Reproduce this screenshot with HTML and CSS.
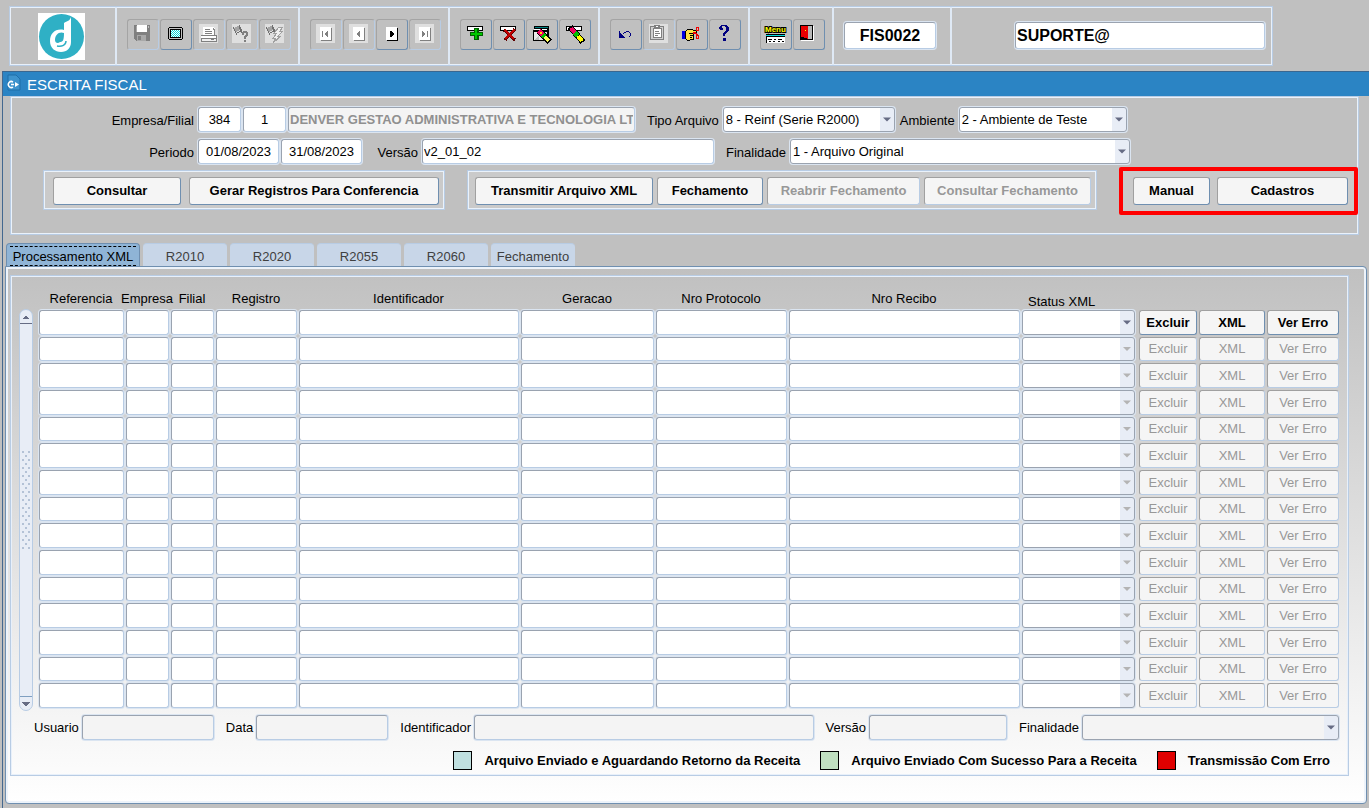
FILE: index.html
```
<!DOCTYPE html>
<html lang="pt-br">
<head>
  <meta charset="UTF-8">
  <meta name="viewport" content="width=device-width, initial-scale=1.0">
  <title>Escrita Fiscal</title>
  <link rel="stylesheet" href="styles.css">
</head>
<body>

  <svg class="defs" aria-hidden="true">
    <defs>
      <pattern id="xadrez" width="2" height="2" patternUnits="userSpaceOnUse">
        <rect width="2" height="2" fill="#ffffff"/>
        <rect width="1" height="1" fill="#00d8d8"/>
        <rect x="1" y="1" width="1" height="1" fill="#00d8d8"/>
      </pattern>
      <g id="barra">
        <rect x="1" y="2" width="16" height="5" fill="#000"/>
        <rect x="2" y="3" width="14" height="3" fill="#fff"/>
      </g>
      <g id="caneta">
        <path d="M2 4h1V3h2V2h2v1h1v3H7v1H5v1H4V7H3V6H2z" fill="#a4a4a4"/>
        <path d="M1 3h1v2h1v2h1v2h1v2H4V9H3V7H2V5H1zM7 1h1v2h1v2h1v4H9V7H8V5H7zM5 8h2V7h2v1H7v1H5z" fill="#707070"/>
      </g>
      <g id="folha-nav">
        <rect width="19" height="19" fill="#dfdfdf"/>
        <rect x="5" y="4" width="11" height="13" fill="#808080"/>
        <rect x="4" y="3" width="11" height="13" fill="#fff"/>
      </g>
    </defs>
  </svg>

  <header class="toolbar">
    <div class="secao logo">
      <svg width="47" height="47" viewBox="0 0 47 47" role="img" aria-label="Logo">
        <rect width="47" height="47" fill="#fff"/>
        <circle cx="23.500" cy="23.500" r="22.500" fill="#2fb0c5"/>
        <path d="M33 4C32 8 29 8 26 10V17C18 15 12 20 12 28c0 7 5 11 11 11 6 0 10-4 10-10z" fill="#fff"/>
        <path d="M26 20c-5-2-9 2-9 7 0 3 3 4 5 2 3 0 4-2 4-9z" fill="#2fb0c5"/>
        <path d="M19 33c5 1 9-1 9-5" stroke="#2fb0c5" stroke-width="1.500" fill="none"/>
      </svg>
    </div>

    <div class="secao">
      <button class="tb" disabled aria-label="Salvar">
        <svg viewBox="0 0 20 20"><path d="M1 1h16v16H3l-2-2z" fill="#808080"/><rect x="4" y="1" width="10" height="7" fill="#fff"/><rect x="3" y="2" width="1" height="6" fill="#a8a8a8"/><rect x="4" y="11" width="9" height="6" fill="#a8a8a8"/><rect x="5" y="12" width="3" height="4" fill="#808080"/><rect x="15" y="2" width="1" height="2" fill="#c0c0c0"/></svg>
      </button>
      <button class="tb" aria-label="Tela">
        <svg viewBox="0 0 20 20"><path d="M3 3h13v1h1v11h-1v1H3v-1H2V4h1z" fill="#000"/><rect x="3" y="4" width="13" height="11" fill="#c0c0c0"/><rect x="4" y="5" width="11" height="9" fill="#000"/><rect x="5" y="6" width="9" height="7" fill="url(#xadrez)"/></svg>
      </button>
      <button class="tb" disabled aria-label="Imprimir">
        <svg viewBox="0 0 20 20"><rect width="19" height="19" fill="#dfdfdf"/><path d="M4 3h10l2 2v6H4z" fill="#fff"/><path d="M14 4h1v1h1v6h-1V6h-1z" fill="#888"/><path d="M6 5h5v1H6zM6 7h7v1H6zM6 9h7v1H6z" fill="#808080"/><rect x="2" y="11" width="16" height="7" fill="#808080"/><rect x="2" y="12" width="15" height="2" fill="#fff"/><rect x="3" y="15" width="14" height="2" fill="#f0f0f0"/><rect x="12" y="15" width="3" height="1" fill="#808080"/></svg>
      </button>
      <button class="tb" disabled aria-label="Entrar consulta">
        <svg viewBox="0 0 20 20"><rect width="19" height="19" fill="#dfdfdf"/><use href="#caneta"/><path d="M10 8h1V7h4v1h1v4h-1v1h-1v2h-2v-3h1v-1h1V9h-2v2h-2zM12 16h2v2h-2z" fill="#808080"/></svg>
      </button>
      <button class="tb" disabled aria-label="Executar consulta">
        <svg viewBox="0 0 20 20"><rect width="19" height="19" fill="#dfdfdf"/><use href="#caneta"/><path d="M18 3h-4l-5 6h3l-4 5h3l-3 5 8-7h-3l5-5h-3z" fill="#f0f0f0" stroke="#a0a0a0"/></svg>
      </button>
    </div>

    <div class="secao">
      <button class="tb" disabled aria-label="Primeiro">
        <svg viewBox="0 0 20 20"><use href="#folha-nav"/><path d="M6 7h1v6H6zM12 7v6h-1v-1h-1v-1H9v-1H8h1V9h1V8h1V7z" fill="#808080"/></svg>
      </button>
      <button class="tb" disabled aria-label="Anterior">
        <svg viewBox="0 0 20 20"><use href="#folha-nav"/><path d="M11 7v6h-1v-1H9v-1H8v-1H7h1V9h1V8h1V7z" fill="#808080"/></svg>
      </button>
      <button class="tb" aria-label="Próximo">
        <svg viewBox="0 0 20 20"><rect x="5" y="4" width="11" height="13" fill="#000"/><rect x="4" y="3" width="11" height="13" fill="#fff"/><path d="M8 7h2v1h1v1h1v2h-1v1h-1v1H8z" fill="#000"/></svg>
      </button>
      <button class="tb" disabled aria-label="Último">
        <svg viewBox="0 0 20 20"><use href="#folha-nav"/><path d="M7 7h1v1h1v1h1v2H9v1H8v1H7zM12 7h1v6h-1z" fill="#808080"/></svg>
      </button>
    </div>

    <div class="secao">
      <button class="tb" aria-label="Inserir registro">
        <svg viewBox="0 0 20 20"><use href="#barra"/><path d="M8 4h5v4h4v4h-4v4H8v-4H4V8h4z" fill="#006000"/><path d="M9 5h2v4h5v2h-5v4H9v-4H5V9h4z" fill="#00c800"/></svg>
      </button>
      <button class="tb" aria-label="Excluir registro">
        <svg viewBox="0 0 20 20"><use href="#barra"/><path d="M5 6l11 10M16 5L6 16" stroke="#600000" stroke-width="3"/><path d="M6 6l9 9M15 6l-9 9" stroke="#c00000" stroke-width="1.500"/></svg>
      </button>
      <button class="tb" aria-label="Limpar bloco">
        <svg viewBox="0 0 20 20"><rect x="2" y="2" width="15" height="11" fill="#000"/><rect x="3" y="3" width="13" height="1" fill="#008080"/><rect x="1" y="6" width="15" height="11" fill="#000"/><rect x="2" y="5" width="13" height="1" fill="#fff"/><path d="M2 8h13v8H7l-1-3-4 3z" fill="#e8e8e8"/><path d="M2 16l5-5v5z" fill="#c0c0c0"/><path d="M7 7l11 11" stroke="#000" stroke-width="6"/><path d="M7 7l4 4" stroke="#f00060" stroke-width="5"/><path d="M11 11l2 2" stroke="#00c000" stroke-width="5"/><path d="M13 13l4 4" stroke="#ffff60" stroke-width="4"/><rect x="8" y="8" width="2" height="2" fill="#ffe000"/></svg>
      </button>
      <button class="tb" aria-label="Limpar registro">
        <svg viewBox="0 0 20 20"><use href="#barra"/><path d="M5 3l13 15" stroke="#000" stroke-width="6"/><path d="M6 4l5 6" stroke="#f00060" stroke-width="4"/><path d="M10 9l3 3" stroke="#00c000" stroke-width="5"/><path d="M13 12l4 5" stroke="#ffff00" stroke-width="4"/></svg>
      </button>
    </div>

    <div class="secao">
      <button class="tb" aria-label="Desfazer">
        <svg viewBox="0 0 20 20"><path d="M3 7v7h6v-1H8v-1H7v-1H6v-1H5V9H4V7z" fill="#000080"/><path d="M7 9h1V8h2V7h3v1h1v1h1v3h-1v1h-1v-1h1V9h-1V8h-3v1H8v1H7z" fill="#000080"/></svg>
      </button>
      <button class="tb" disabled aria-label="Colar">
        <svg viewBox="0 0 20 20"><rect width="19" height="19" fill="#dfdfdf"/><rect x="1.500" y="2.500" width="13" height="13" rx="1" fill="#d0d0d0" stroke="#808080"/><rect x="4.500" y="4.500" width="8" height="9" fill="#fff" stroke="#808080"/><path d="M5 1h6v3H5z" fill="#808080"/><rect x="7" y="2" width="2" height="1" fill="#fff"/><path d="M6 7h4v1H6zM6 9h5v1H6zM6 11h3v1H6z" fill="#808080"/></svg>
      </button>
      <button class="tb" aria-label="Recortar">
        <svg viewBox="0 0 20 20"><path d="M0 7h3v8H0z" fill="#0000e0"/><path d="M3 8l3-3h3l2 1h3v3h-3v6H9l-1 1H5l-2-2z" fill="#ffe040" stroke="#000"/><path d="M7 9h4v1H7zM8 11h3v1H8zM8 13h2v1H8z" fill="#000"/><path d="M11 8l3 1 3 4M11 10l3-1" stroke="#f00000" fill="none"/><circle cx="15.500" cy="5" r="1.600" fill="none" stroke="#f00000"/><circle cx="15.500" cy="13" r="1.600" fill="none" stroke="#f00000"/></svg>
      </button>
      <button class="tb" aria-label="Ajuda">
        <svg viewBox="0 0 20 20"><path d="M4 3h1V2h1V1h6v1h1v1h1v4h-1v1h-1v1h-1v1h-1v2H8V9h1V8h1V7h1V3h-1V2H7v2h1v2H5V5H4z" fill="#000080"/><rect x="8" y="14" width="3" height="3" fill="#000080"/></svg>
      </button>
    </div>

    <div class="secao">
      <button class="tb" aria-label="Menu">
        <svg viewBox="0 0 20 20"><text class="menu-txt" x="-1" y="8" aria-hidden="true">Menu</text><rect y="10" width="19" height="1" fill="#000"/><rect y="11" width="19" height="1" fill="#00e0e0"/><rect y="12" width="19" height="7" fill="#fff"/><path d="M0 12h19v1H0zM0 13h1v6H0zM2 15h4v1H2zM8 15h2v1H8zM12 15h4v1h-4zM3 17h2v1H3zM7 17h2v1H7zM12 17h2v1h-2zM16 17h2v1h-2z" fill="#000"/></svg>
      </button>
      <button class="tb" aria-label="Sair">
        <svg viewBox="0 0 20 20"><rect x="2" y="2" width="13" height="15" fill="#fff"/><rect x="1" y="1" width="13" height="15" fill="#000"/><rect x="9" y="2" width="4" height="13" fill="#b8b8b8"/><path d="M2 2h7v13H8v-1H5v-1H2z" fill="#e80000"/><rect x="6" y="6" width="1" height="1" fill="#ffff00"/></svg>
      </button>
    </div>

    <div class="secao">
      <input class="codigo" type="text" value="FIS0022" aria-label="Programa">
    </div>

    <div class="secao usuario">
      <input type="text" value="SUPORTE@" aria-label="Usuario logado">
    </div>
  </header>

  <main class="janela">
    <div class="titulo">
      <svg width="14" height="17" viewBox="0 0 14 17" aria-hidden="true">
        <path d="M1 1h8l4 4v11H1z" fill="#3d93cd" stroke="#1f6ea8"/>
        <path d="M6 8a3 3 0 1 0 0 5M4 10.500h3" stroke="#fff" stroke-width="1.500" fill="none"/>
        <path d="M8 8l4 2.500-4 2.500z" fill="#fff"/>
      </svg>
      <h1>ESCRITA FISCAL</h1>
    </div>

    <section class="filtros">
      <div class="linha">
        <div class="campo">
          <label class="primeiro" for="empresa">Empresa/Filial</label>
          <div class="junto">
            <input class="curto" type="text" id="empresa" value="384">
            <input class="curto" type="text" value="1" aria-label="Filial">
            <input class="nome" type="text" value="DENVER GESTAO ADMINISTRATIVA E TECNOLOGIA LTDA" disabled aria-label="Nome da empresa">
          </div>
        </div>
        <div class="campo">
          <label for="tipo">Tipo Arquivo</label>
          <select id="tipo" class="tipo"><option>8 - Reinf (Serie R2000)</option></select>
        </div>
        <div class="campo perto">
          <label for="ambiente">Ambiente</label>
          <select id="ambiente" class="ambiente"><option>2 - Ambiente de Teste</option></select>
        </div>
      </div>

      <div class="linha">
        <div class="campo">
          <label class="primeiro" for="periodo">Periodo</label>
          <div class="junto">
            <input class="data" type="text" id="periodo" value="01/08/2023">
            <input class="data" type="text" value="31/08/2023" aria-label="Periodo final">
          </div>
        </div>
        <div class="campo">
          <label for="versao">Versão</label>
          <input class="versao" type="text" id="versao" value="v2_01_02">
        </div>
        <div class="campo">
          <label for="finalidade">Finalidade</label>
          <select id="finalidade" class="finalidade"><option>1 - Arquivo Original</option></select>
        </div>
      </div>

      <div class="acoes">
        <div class="grupo consulta">
          <button class="btn b-consultar">Consultar</button>
          <button class="btn b-gerar">Gerar Registros Para Conferencia</button>
        </div>
        <div class="grupo">
          <button class="btn b-transmitir">Transmitir Arquivo XML</button>
          <button class="btn b-fechar">Fechamento</button>
          <button class="btn b-reabrir" disabled>Reabrir Fechamento</button>
          <button class="btn b-consfech" disabled>Consultar Fechamento</button>
        </div>
        <div class="destaque">
          <button class="btn b-manual">Manual</button>
          <button class="btn b-cadastros">Cadastros</button>
        </div>
      </div>
    </section>

    <nav class="abas" role="tablist">
      <button class="aba ativa" role="tab" aria-selected="true"><span>Processamento XML</span></button>
      <button class="aba" role="tab">R2010</button>
      <button class="aba" role="tab">R2020</button>
      <button class="aba" role="tab">R2055</button>
      <button class="aba" role="tab">R2060</button>
      <button class="aba" role="tab">Fechamento</button>
    </nav>

    <section class="painel">
      <div class="quadro">
        <div class="grade">
          <div class="rolagem">
            <button class="sobe" aria-label="Subir"></button>
            <div class="trilho"><span class="grip"></span></div>
            <button class="desce" aria-label="Descer"></button>
          </div>
          <table>
            <colgroup>
              <col class="c-ref"><col class="c-emp"><col class="c-emp"><col class="c-reg"><col>
              <col class="c-ger"><col class="c-prot"><col class="c-rec"><col class="c-status">
              <col class="c-exc"><col class="c-xml"><col class="c-erro">
            </colgroup>
            <thead>
              <tr>
                <th><span>Referencia</span></th>
                <th><span>Empresa</span></th>
                <th><span>Filial</span></th>
                <th><span>Registro</span></th>
                <th><span>Identificador</span></th>
                <th><span>Geracao</span></th>
                <th><span>Nro Protocolo</span></th>
                <th><span>Nro Recibo</span></th>
                <th class="status">Status XML</th>
                <td></td><td></td><td></td>
              </tr>
            </thead>
            <tbody id="linhas"></tbody>
          </table>
        </div>

        <div class="rodape">
          <label for="r-usuario">Usuario</label>
          <input class="r-curto" type="text" id="r-usuario" disabled>
          <label for="r-data">Data</label>
          <input class="r-curto" type="text" id="r-data" disabled>
          <label for="r-ident">Identificador</label>
          <input class="r-ident" type="text" id="r-ident" disabled>
          <label for="r-versao">Versão</label>
          <input class="r-versao" type="text" id="r-versao" disabled>
          <label for="r-final">Finalidade</label>
          <select class="r-final" id="r-final"><option></option></select>
        </div>

        <ul class="legenda">
          <li><i class="aguardando"></i>Arquivo Enviado e Aguardando Retorno da Receita</li>
          <li><i class="sucesso"></i>Arquivo Enviado Com Sucesso Para a Receita</li>
          <li><i class="erro"></i>Transmissão Com Erro</li>
        </ul>
      </div>
    </section>
  </main>

  <script>
    const campos = ['Referencia', 'Empresa', 'Filial', 'Registro', 'Identificador', 'Geracao', 'Nro Protocolo', 'Nro Recibo'];
    const linhas = document.getElementById('linhas');
    let html = '';

    // so a primeira linha fica habilitada
    for (let i = 1; i <= 15; i++) {
      const des = i > 1 ? 'disabled' : '';
      html += '<tr>';
      campos.forEach(c => {
        html += `<td><input type="text" aria-label="${c} ${i}"></td>`;
      });
      html += `<td class="status"><select aria-label="Status XML ${i}" ${des}><option></option></select></td>`;
      html += `<td><button class="btn" ${des}>Excluir</button></td>`;
      html += `<td><button class="btn" ${des}>XML</button></td>`;
      html += `<td class="ultimo"><button class="btn" ${des}>Ver Erro</button></td>`;
      html += '</tr>';
    }
    linhas.innerHTML = html;
  </script>
</body>
</html>
```
FILE: styles.css
```
*{
  box-sizing: border-box;
}
body{
  margin: 0;
  padding-left: 2px;
  background-color: #c0c0c0;
  color: black;
  font: 13px "Liberation Sans", Arial, sans-serif;
}
.defs{
  position: absolute;
  width: 0;
  height: 0;
}
button, input, select{
  font: inherit;
  color: inherit;
  margin: 0;
}

/* campos */
input, select{
  height: 25px;
  padding: 0 1px;
  background-color: white;
  border: 1px solid #9aa3b0;
  border-right-color: #b8cce4;
  border-bottom-color: #b8cce4;
  border-radius: 3px;
  box-shadow: 0 0 0 1px #dbe5f1;
}
input:disabled{
  background-color: #f4f4f4;
  color: #909090;
}
select{
  appearance: none;
  padding: 0 20px 0 2px;
  border-color: #9aa3b0;
  background-image: url("data:image/svg+xml,%3Csvg xmlns='http://www.w3.org/2000/svg' width='14' height='26'%3E%3Crect width='14' height='26' fill='%23e8edf6'/%3E%3Cpath d='M3 11h8l-4 4z' fill='%23666c84'/%3E%3C/svg%3E");
  background-repeat: no-repeat;
  background-position: right center;
}
select:disabled{
  opacity: 1;
  background-image: url("data:image/svg+xml,%3Csvg xmlns='http://www.w3.org/2000/svg' width='14' height='26'%3E%3Crect width='14' height='26' fill='%23e8edf6'/%3E%3Cpath d='M3 11h8l-4 4z' fill='%23b4b4b4'/%3E%3C/svg%3E");
}
.btn{
  height: 28px;
  padding: 0 0 1px;
  font-weight: bold;
  background-color: #f5f5f5;
  border: 1px solid #a0a0a0;
  border-right-color: #6f8fb0;
  border-bottom-color: #6f8fb0;
  border-radius: 3px;
  white-space: nowrap;
}
.btn:disabled{
  color: #989898;
  border-right-color: #b8cce4;
  border-bottom-color: #b8cce4;
}

/* barra de ferramentas */
.toolbar{
  display: flex;
  width: fit-content;
  height: 60px;
  margin: 6px 0 5px 7px;
  border: 1px solid #b8cce4;
  box-shadow: inset 0 0 0 1px #e8f0fa;
}
.secao{
  display: flex;
  align-items: flex-start;
  gap: 1px;
  padding: 12px 7px 0 10px;
  border-right: 2px solid #dfe9f5;
}
.secao:last-child{
  border-right: none;
}
.logo{
  padding: 6px 30px 0 28px;
}
.tb{
  width: 32px;
  height: 31px;
  padding: 4px 5px 5px;
  background: none;
  border: 1px solid #a4a4a4;
  border-right-color: #6f8fb0;
  border-bottom-color: #6f8fb0;
  border-radius: 3px;
}
.tb:disabled{
  border-right-color: #b8cce4;
  border-bottom-color: #b8cce4;
}
.tb svg{
  display: block;
  width: 20px;
  height: 20px;
  overflow: visible;
  shape-rendering: crispEdges;
}
.menu-txt{
  font: bold 8px "Liberation Sans", Arial, sans-serif;
  fill: #ffff00;
  stroke: black;
  stroke-width: 2px;
  paint-order: stroke;
}
.toolbar input{
  height: 27px;
  margin-top: 3px;
  font-size: 16px;
  font-weight: bold;
}
.toolbar .codigo{
  width: 92px;
  margin-right: 7px;
  text-align: center;
}
.usuario{
  padding-left: 63px;
}
.usuario input{
  width: 250px;
}

/* janela */
.janela{
  border-left: 1px solid #44688f;
  padding-bottom: 5px;
}
.titulo{
  display: flex;
  align-items: center;
  gap: 6px;
  height: 25px;
  padding-left: 4px;
  background-color: #2b84c4;
  border-top: 1px solid #3a6790;
}
.titulo svg{
  margin-bottom: 4px;
}
h1{
  margin: 0;
  color: white;
  font-size: 15px;
  font-weight: normal;
}
.filtros{
  margin: 0 10px 8px 7px;
  height: 139px;
  padding-top: 10px;
  border: 1px solid #b8cce4;
  box-shadow: inset 0 0 0 1px #eaf2fb;
}
.linha{
  display: flex;
  gap: 12px;
  margin-bottom: 7px;
}
.campo{
  display: flex;
  gap: 4px;
}
.campo label{
  min-width: 44px;
  padding-top: 6px;
  text-align: right;
}
.campo .primeiro{
  width: 183px;
}
.perto{
  margin-left: -7px;
}
.junto{
  display: flex;
  gap: 2px;
}
.curto, .data{
  width: 43px;
  text-align: center;
}
.data{
  width: 81px;
}
.nome{
  width: 347px;
  font-weight: bold;
}
.tipo{
  width: 172px;
}
.ambiente{
  width: 168px;
}
.versao{
  width: 292px;
}
.finalidade{
  width: 340px;
}
.acoes{
  display: flex;
  gap: 22px;
  margin: -1px 7px 0 32px;
}
.grupo{
  display: flex;
  gap: 4px;
  height: 40px;
  padding: 6px 5px 0 7px;
  background-color: #cacaca;
  border: 1px solid #b8cce4;
  box-shadow: inset 0 0 0 1px #eaf2fb;
}
.consulta{
  gap: 8px;
  padding-left: 9px;
}
.destaque{
  display: flex;
  gap: 7px;
  height: 48px;
  margin: -3px 0 0 auto;
  padding: 6px 6px 0 10px;
  background-color: #cacaca;
  border: 4px solid #ff0000;
  border-radius: 2px;
}
.b-consultar{ width: 128px; }
.b-gerar{ width: 250px; }
.b-transmitir{ width: 178px; }
.b-fechar{ width: 106px; }
.b-reabrir{ width: 153px; }
.b-consfech{ width: 167px; }
.b-manual{ width: 77px; }
.b-cadastros{ width: 131px; }

/* abas */
.abas{
  display: flex;
  gap: 3px;
  padding-left: 3px;
}
.aba{
  width: 84px;
  height: 23px;
  padding: 3px 0 0;
  color: #404040;
  background-color: #c8d6e8;
  border: none;
  border-top: 1px solid #b8cce4;
  border-radius: 4px 4px 0 0;
}
.ativa{
  width: 134px;
  padding: 0;
  color: black;
  background-color: #8fb4d6;
  border: 1px solid #6f8fb0;
  border-bottom: none;
}
.ativa span{
  display: block;
  margin: 2px 3px 0;
  padding: 2px 0 1px;
  border-top: 1px dashed black;
  border-bottom: 1px dashed black;
}
.painel{
  margin: 0 2px;
  padding: 8px 17px 27px 4px;
  background: linear-gradient(#c0c0c0, #ffffff);
  border: 1px solid #6f8fb0;
  border-radius: 0 4px 4px 4px;
  box-shadow: inset 0 0 0 2px #edf3fa;
}
.quadro{
  padding: 2px 9px 5px 8px;
  border: 1px solid #b8cce4;
  box-shadow: inset 0 0 0 1px #e8f0fa;
}
.grade{
  display: flex;
  gap: 6px;
}

/* barra de rolagem */
.rolagem{
  display: flex;
  flex-direction: column;
  width: 14px;
  margin: 31px 0 -2px;
  background-color: #e8edf6;
  border: 1px solid #b8cce4;
  border-radius: 7px;
}
.sobe, .desce{
  height: 14px;
  padding: 0;
  border: none;
  border-bottom: 1px solid #666c84;
  background: conic-gradient(from 135deg at 50% 5px, #666c84 90deg, transparent 0) center top 0 / 8px 9px no-repeat;
}
.desce{
  border-bottom: none;
  border-top: 1px solid #7f9fc0;
  background: conic-gradient(from -45deg at 50% 4px, #666c84 90deg, transparent 0) center bottom 4px / 8px 4px no-repeat;
}
.trilho{
  display: flex;
  flex: 1;
  align-items: center;
  justify-content: center;
  padding-bottom: 20px;
}
.grip{
  width: 9px;
  height: 98px;
  background-image: radial-gradient(circle at 1px 1px, #b4c2d6 1px, transparent 1px),
    radial-gradient(circle at 1px 1px, #b4c2d6 1px, transparent 1px);
  background-size: 6px 8px;
  background-position: 0 0, 3px 4px;
}

/* tabela */
table{
  flex: 1;
  width: 100%;
  table-layout: fixed;
  border-collapse: collapse;
}
th, td{
  padding: 0;
}
th{
  height: 31px;
  padding-bottom: 2px;
  font-weight: normal;
  vertical-align: bottom;
}
th span{
  display: block;
  height: 16px;
  margin: 0 -6px 0 -9px;
}
th.status{
  padding: 0 0 0 6px;
  text-align: left;
}
.c-ref{ width: 87px; }
.c-emp{ width: 45px; }
.c-reg{ width: 83px; }
.c-ger{ width: 135px; }
.c-prot{ width: 133px; }
.c-rec{ width: 233px; }
.c-status{ width: 117px; }
.c-exc{ width: 60px; }
.c-xml{ width: 68px; }
.c-erro{ width: 72px; }

tbody td{
  height: 27px;
  padding: 1px 2px 1px 0;
  vertical-align: top;
}
tbody tr:nth-child(3n+2) td{
  height: 26px;
}
tbody td.status{
  padding-right: 4px;
}
tbody td.ultimo{
  padding-right: 0;
}
tbody input, tbody select, tbody .btn{
  display: block;
  width: 100%;
  height: 25px;
}
tbody tr:nth-child(3n+2) :is(input, select, .btn){
  height: 24px;
}
tbody .btn:disabled{
  font-weight: normal;
}

/* rodape */
.rodape{
  display: flex;
  align-items: center;
  gap: 3px;
  margin: 6px 0 0 15px;
}
.rodape input{
  margin-right: 9px;
}
.r-curto{
  width: 132px;
}
.r-ident{
  flex: 1;
}
.r-versao{
  width: 138px;
}
.r-final{
  width: 257px;
  background-color: #f4f4f4;
}
.legenda{
  display: flex;
  justify-content: flex-end;
  gap: 20px;
  margin: 11px 9px 0 0;
  padding: 0;
  list-style: none;
  font-weight: bold;
}
.legenda li{
  display: flex;
  align-items: center;
  gap: 12px;
}
.legenda i{
  width: 19px;
  height: 19px;
  border: 1px solid black;
}
.aguardando{
  background-color: #c0e0e0;
}
.sucesso{
  background-color: #c0e0c0;
}
.erro{
  background-color: #e00000;
}
```
